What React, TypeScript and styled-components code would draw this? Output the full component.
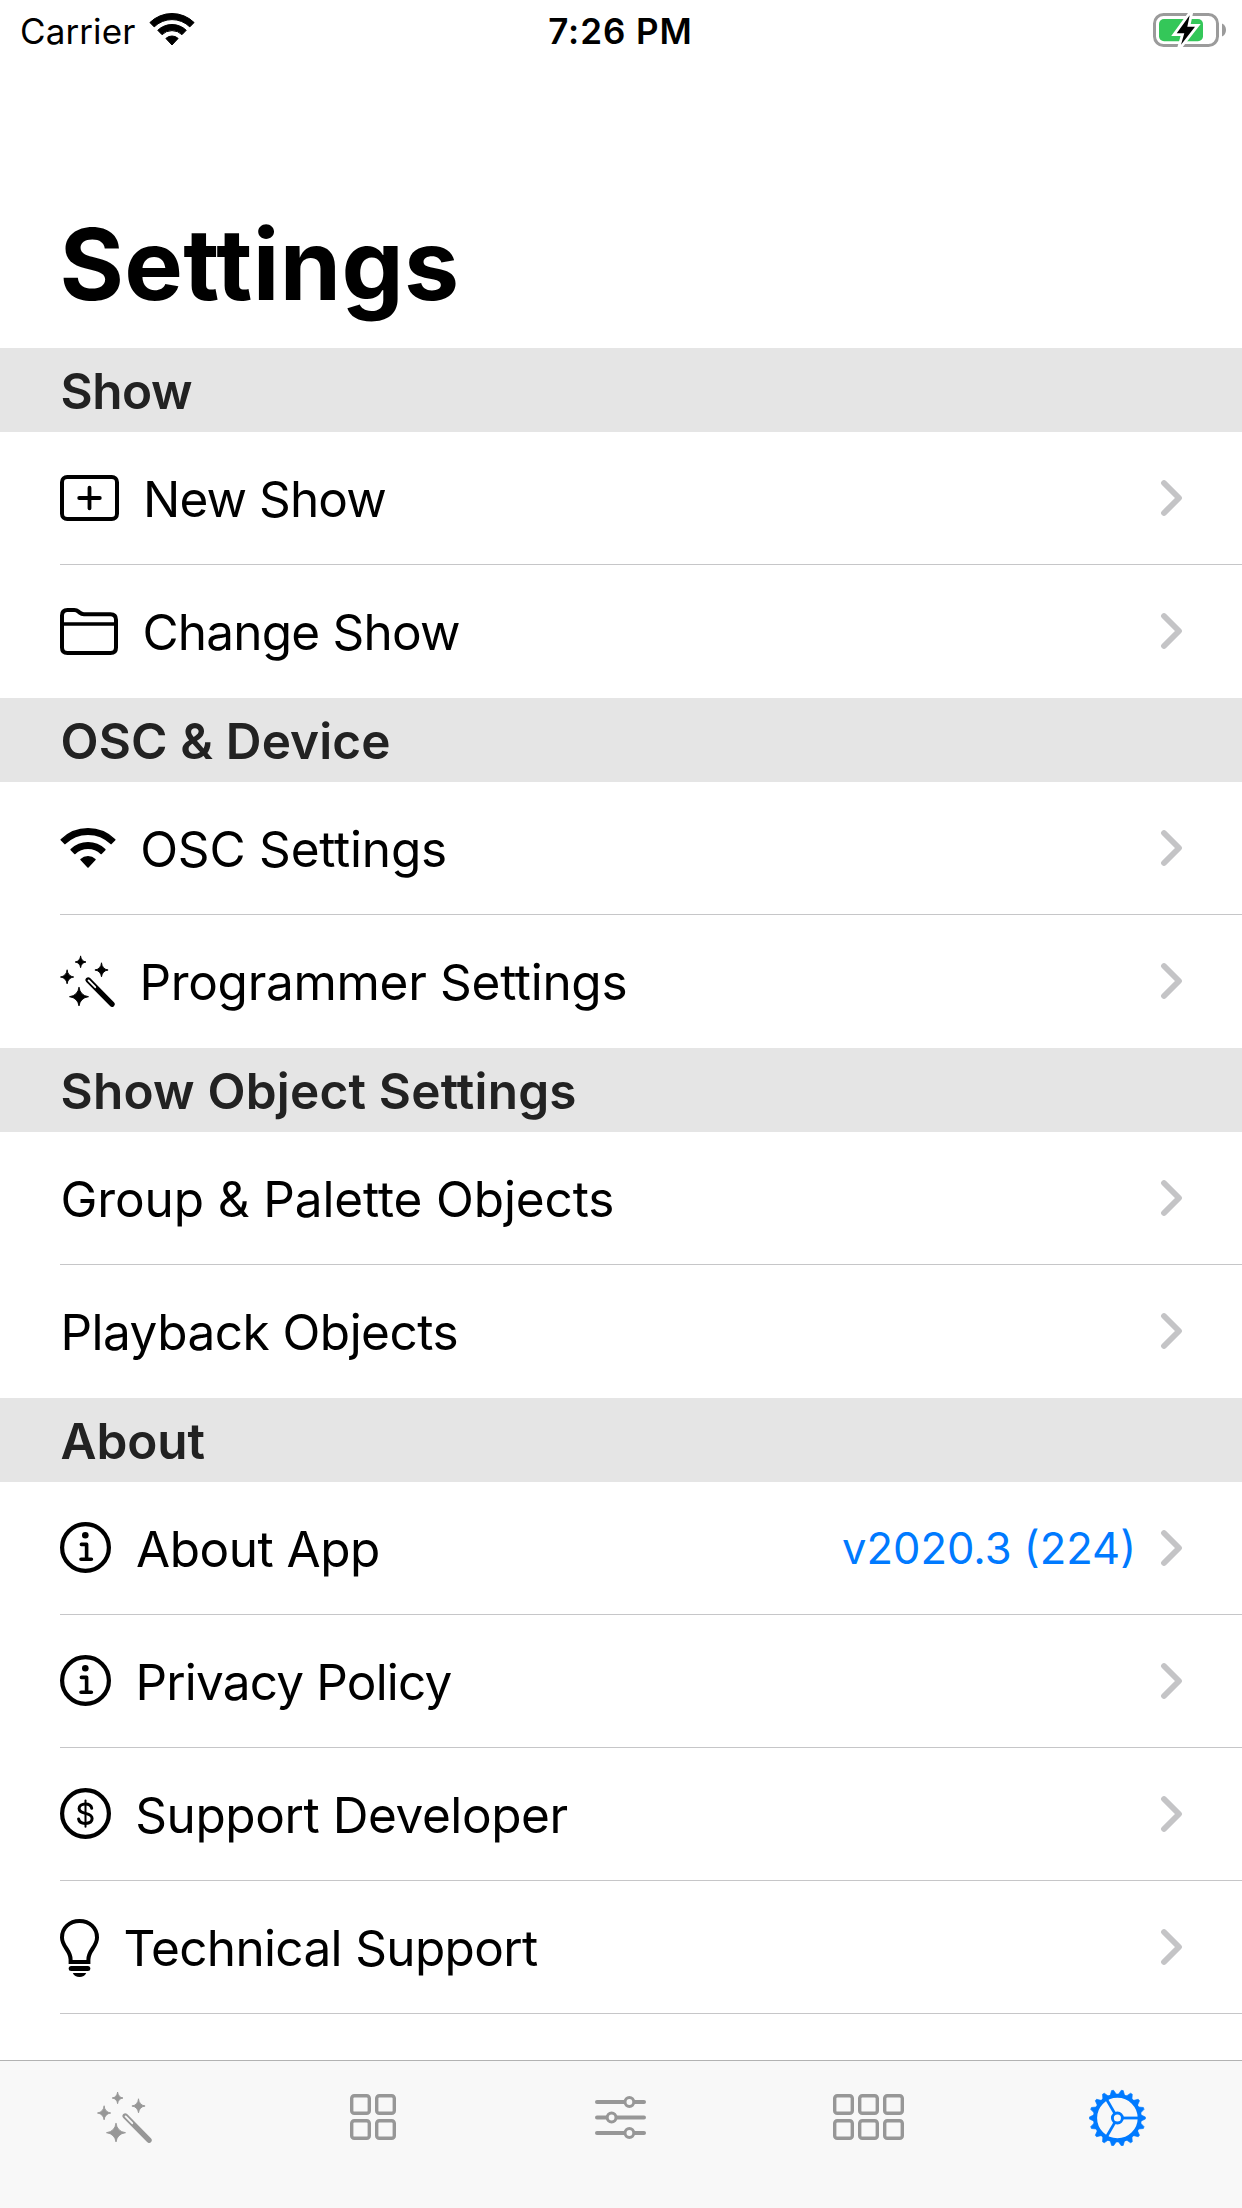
import React from "react";
import styled, { createGlobalStyle } from "styled-components";

const GlobalStyle = createGlobalStyle`
  *, *::before, *::after { box-sizing: border-box; }
  body {
    margin: 0;
    background: #fff;
    color: #000;
    font-family: Inter, "Liberation Sans", sans-serif;
  }
`;

const Screen = styled.div`
  display: flex;
  flex-direction: column;
  width: 1242px;
  height: 2208px;
  overflow: hidden;
  background: #fff;
`;

const StatusBar = styled.header`
  display: grid;
  grid-template-columns: 1fr auto 1fr;
  align-items: center;
  height: 62px;
  padding: 0 16px 0 20px;
  font-size: 35px;
  line-height: 62px;
`;

const CarrierGroup = styled.div`
  display: flex;
  align-items: center;
  gap: 14px;
  letter-spacing: 0.1px;

  svg { margin-bottom: 3px; }
`;

const Clock = styled.div`
  font-weight: 600;
  letter-spacing: 0.95px;
  padding-right: 5px;
`;

const BatteryGroup = styled.div`
  display: flex;
  justify-content: flex-end;
  margin-bottom: 2px;
`;

const Title = styled.h1`
  margin: 0;
  padding: 143px 0 23px 59.5px;
  font-size: 98.5px;
  line-height: 120px;
  font-weight: 700;
  letter-spacing: 0.35px;
`;

const Content = styled.main`
  display: flex;
  flex-direction: column;
  flex: 1;
  min-height: 0;
  overflow: hidden;
`;

const SectionHeader = styled.h2<{ $spacing: number }>`
  margin: 0;
  height: 84px;
  padding: 2px 0 0 60.6px;
  background: #e5e5e5;
  color: #222;
  font-size: 49.5px;
  line-height: 82px;
  font-weight: 600;
  letter-spacing: ${(p) => p.$spacing}px;
`;

const List = styled.ul`
  list-style: none;
  margin: 0;
  padding: 0 0 0 60px;
`;

const Row = styled.li<{ $line: boolean }>`
  display: flex;
  align-items: center;
  height: 133px;
  padding-right: 60px;
  border-bottom: 1px solid ${(p) => (p.$line ? "#c6c6c8" : "transparent")};

  svg { overflow: visible; }
`;

const IconSlot = styled.span<{ $width: number }>`
  display: flex;
  flex: none;
  width: ${(p) => p.$width}px;
`;

const Label = styled.span<{ $spacing: number }>`
  flex: 1;
  padding-top: 2px;
  font-size: 49.5px;
  line-height: 60px;
  letter-spacing: ${(p) => p.$spacing}px;
  white-space: nowrap;
`;

const Detail = styled.span`
  margin-right: 25px;
  font-size: 43.5px;
  line-height: 52px;
  color: #007aff;
`;

const TabBar = styled.nav`
  display: grid;
  grid-template-columns: repeat(5, 1fr);
  flex: none;
  height: 148px;
  border-top: 1px solid #b2b2b2;
  background: #f8f8f8;
`;

const Tab = styled.a<{ $active?: boolean }>`
  display: flex;
  align-items: center;
  justify-content: center;
  height: 113px;
  color: ${(p) => (p.$active ? "#007aff" : "#979797")};
`;

/* Annular sector opening upwards around (cx, cy). */
function band(cx: number, cy: number, outer: number, inner: number, deg: number) {
  const a = (deg * Math.PI) / 180;
  const s = Math.sin(a);
  const c = Math.cos(a);
  return (
    `M${cx - outer * s} ${cy - outer * c}A${outer} ${outer} 0 0 1 ${cx + outer * s} ${cy - outer * c}` +
    `L${cx + inner * s} ${cy - inner * c}A${inner} ${inner} 0 0 0 ${cx - inner * s} ${cy - inner * c}Z`
  );
}

function WifiStatusIcon() {
  return (
    <svg width="46" height="33" viewBox="0 0 46 33" fill="#000" stroke="#000" strokeWidth="1" strokeLinejoin="round">
      <path d={band(23, 32, 31.5, 25.4, 44.5)} />
      <path d={band(23, 32, 20.5, 14.4, 44)} />
      <path d={band(23, 32, 9, 0, 43)} />
    </svg>
  );
}

function WifiIcon() {
  return (
    <svg width="56" height="40" viewBox="0 0 56 40" fill="#000" stroke="#000" strokeWidth="1.6" strokeLinejoin="round">
      <path d={band(28, 39, 38.2, 32.9, 44.5)} />
      <path d={band(28, 39, 24.2, 18.9, 44)} />
      <path d={band(28, 39, 10.2, 0, 43)} />
    </svg>
  );
}

function BatteryIcon() {
  const bolt = "M36.7 5.3L23.7 23.3H31.3L28 34.7L42 16.7H34.3Z";
  return (
    <svg width="73" height="40" viewBox="0 0 73 40">
      <rect x="1.5" y="4.5" width="63" height="31" rx="9" fill="none" stroke="#9b9b9b" strokeWidth="3" />
      <rect x="6" y="9" width="44" height="22.3" rx="5" fill="#34c759" />
      <path d="M69 13.6C71.5 14.6 73 17 73 20S71.5 25.4 69 26.4Z" fill="#9b9b9b" />
      <path d={bolt} fill="#fff" stroke="#fff" strokeWidth="5.6" strokeMiterlimit="10" />
      <path d={bolt} fill="#000" />
    </svg>
  );
}

function PlusRectIcon() {
  return (
    <svg width="59" height="46" viewBox="0 0 59 46" fill="none" stroke="#000" strokeWidth="4" strokeLinecap="round">
      <rect x="2" y="2" width="55" height="42" rx="5.2" />
      <path d="M19.2 23H39.8M29.5 12.7V33.3" strokeWidth="3.8" />
    </svg>
  );
}

function FolderIcon() {
  return (
    <svg width="58" height="46" viewBox="0 0 58 46" fill="none" stroke="#000" strokeWidth="4">
      <path d="M2 7.5Q2 2 7.5 2H14.3C16.3 2 17.2 2.5 18.5 3.6L19.7 4.6C21.1 5.8 21.9 6.2 23.9 6.2H50.5Q56 6.2 56 11.7V39.5Q56 45 50.5 45H7.5Q2 45 2 39.5Z" />
      <path d="M2 16H56" strokeWidth="3.6" />
    </svg>
  );
}

function star(cx: number, cy: number, rx: number, ry: number) {
  const k = 0.13;
  return (
    `M${cx} ${cy - ry}Q${cx + rx * k} ${cy - ry * k} ${cx + rx} ${cy}` +
    `Q${cx + rx * k} ${cy + ry * k} ${cx} ${cy + ry}` +
    `Q${cx - rx * k} ${cy + ry * k} ${cx - rx} ${cy}` +
    `Q${cx - rx * k} ${cy - ry * k} ${cx} ${cy - ry}Z`
  );
}

function WandIcon({ back }: { back: string }) {
  return (
    <svg width="55" height="51" viewBox="0 0 55 51" fill="currentColor" stroke="currentColor" strokeLinecap="round" strokeLinejoin="round">
      <g strokeWidth="0.9">
        <path d={star(20.6, 6, 5.4, 5.7)} />
        <path d={star(41.5, 14, 6.6, 6.8)} />
        <path d={star(7.1, 21, 6.6, 6.8)} />
        <path d={star(19, 40.7, 9.5, 9.2)} />
      </g>
      <path d="M28.2 24L52 48.2" strokeWidth="5.4" />
      <path d="M28.6 24.4L35.2 31.2" stroke={back} strokeWidth="1.9" />
    </svg>
  );
}

function InfoIcon() {
  return (
    <svg width="51" height="52" viewBox="0 0 51 52" fill="none" stroke="#000" strokeLinecap="round" strokeLinejoin="round">
      <circle cx="25.5" cy="25.5" r="23.4" strokeWidth="4.2" />
      <circle cx="25.3" cy="13.2" r="3.3" fill="#000" stroke="none" />
      <path d="M21.4 22.4H26.6V37.3M21 37.3H31.4" strokeWidth="3.6" />
    </svg>
  );
}

function DollarIcon() {
  return (
    <svg width="51" height="52" viewBox="0 0 51 52" fill="none" stroke="#000" strokeLinecap="round">
      <circle cx="25.5" cy="25.5" r="23.4" strokeWidth="4.2" />
      <path
        d="M31.7 20.2C31.2 17.4 28.9 15.9 25.4 15.9C21.7 15.9 19.1 17.8 19.1 20.5C19.1 23.1 21 24.4 25.5 25.4C30.1 26.4 32.1 27.9 32.1 30.6C32.1 33.7 29.5 35.4 25.4 35.4C21.5 35.4 19 33.8 18.6 31"
        strokeWidth="3"
      />
      <path d="M25.5 12.6V38.8" strokeWidth="2" />
    </svg>
  );
}

function BulbIcon() {
  return (
    <svg width="39" height="56" viewBox="0 0 39 56" fill="none" stroke="#000" strokeWidth="4">
      <path d="M10.6 43V40.5C10.6 31 2 28 2 18.5C2 8.8 9.5 2 19.5 2C29.5 2 37 8.8 37 18.5C37 28 28.4 31 28.4 40.5V43Z" />
      <rect x="8.7" y="47" width="21.6" height="5" rx="2.5" fill="#000" stroke="none" />
      <path d="M12.8 54H26.2C25.2 56.6 22.6 58 19.5 58S13.8 56.6 12.8 54Z" fill="#000" stroke="none" />
    </svg>
  );
}

function Chevron() {
  return (
    <svg width="21" height="36" viewBox="0 0 21 36" fill="none" stroke="#c4c4c6" strokeWidth="5.8" strokeLinecap="round" strokeLinejoin="round">
      <path d="M3 3L18 18L3 33" />
    </svg>
  );
}

function SquaresIcon({ columns }: { columns: number }) {
  const width = Math.ceil((columns * 25 - 4) / 2) * 2;
  const cells: React.ReactNode[] = [];
  for (let row = 0; row < 2; row++) {
    for (let col = 0; col < columns; col++) {
      cells.push(<rect key={`${row}-${col}`} x={col * 25 + 1.7} y={row * 25 + 1.7} width="17.6" height="17.6" rx="2.6" />);
    }
  }
  return (
    <svg width={width} height="47" viewBox={`0 0 ${width} 47`} fill="none" stroke="currentColor" strokeWidth="3.4">
      {cells}
    </svg>
  );
}

function SlidersIcon() {
  const tracks = [
    { y: 6, knob: 34.4 },
    { y: 21.5, knob: 16.6 },
    { y: 37, knob: 34.4 },
  ];
  return (
    <svg width="51" height="43" viewBox="0 0 51 43" stroke="currentColor" strokeLinecap="round">
      {tracks.map((t) => (
        <g key={t.y}>
          <path d={`M2 ${t.y}H49`} strokeWidth="4" />
          <circle cx={t.knob} cy={t.y} r="4.4" fill="#f8f8f8" strokeWidth="3" />
        </g>
      ))}
    </svg>
  );
}

function GearIcon() {
  const teeth = Array.from({ length: 18 }, (_, i) => i * 20);
  return (
    <svg width="57" height="57" viewBox="0 0 57 57" fill="none" stroke="currentColor">
      <g transform="translate(28.4 29)">
        <circle r="22.3" strokeWidth="4" />
        {teeth.map((a) => (
          <path key={a} d="M23.4 -3.2L28 -1V1L23.4 3.2Z" fill="currentColor" strokeWidth="0.6" strokeLinejoin="round" transform={`rotate(${a})`} />
        ))}
        {[0, 120, 240].map((a) => (
          <path key={a} d="M5 0H22" strokeWidth="2.8" transform={`rotate(${a})`} />
        ))}
        <circle r="5" strokeWidth="2.9" />
      </g>
    </svg>
  );
}

type Item = {
  label: string;
  spacing: number;
  icon?: React.ReactNode;
  slot?: number;
  detail?: string;
};

type Section = { title: string; spacing: number; open?: boolean; items: Item[] };

const sections: Section[] = [
  {
    title: "Show",
    spacing: -0.5,
    items: [
      { label: "New Show", spacing: -0.9, icon: <PlusRectIcon />, slot: 83 },
      { label: "Change Show", spacing: -0.8, icon: <FolderIcon />, slot: 82.5 },
    ],
  },
  {
    title: "OSC & Device",
    spacing: 0.12,
    items: [
      { label: "OSC Settings", spacing: -0.2, icon: <WifiIcon />, slot: 80.2 },
      { label: "Programmer Settings", spacing: -0.3, icon: <WandIcon back="#fff" />, slot: 79.4 },
    ],
  },
  {
    title: "Show Object Settings",
    spacing: 0.2,
    items: [
      { label: "Group & Palette Objects", spacing: -0.12, slot: 0.5 },
      { label: "Playback Objects", spacing: -0.52, slot: 0.5 },
    ],
  },
  {
    title: "About",
    spacing: -0.1,
    open: true,
    items: [
      { label: "About App", spacing: -0.5, icon: <InfoIcon />, slot: 76, detail: "v2020.3 (224)" },
      { label: "Privacy Policy", spacing: -0.83, icon: <InfoIcon />, slot: 75.5 },
      { label: "Support Developer", spacing: -0.42, icon: <DollarIcon />, slot: 75.2 },
      { label: "Technical Support", spacing: -0.65, icon: <BulbIcon />, slot: 63.5 },
    ],
  },
];

export default function App() {
  return (
    <>
      <GlobalStyle />
      <Screen>
        <StatusBar>
          <CarrierGroup>
            Carrier
            <WifiStatusIcon />
          </CarrierGroup>
          <Clock>7:26 PM</Clock>
          <BatteryGroup>
            <BatteryIcon />
          </BatteryGroup>
        </StatusBar>
        <Content>
          <Title>Settings</Title>
          {sections.map((section) => (
            <section key={section.title}>
              <SectionHeader $spacing={section.spacing}>{section.title}</SectionHeader>
              <List>
                {section.items.map((item, i) => (
                  <Row key={item.label} $line={section.open || i < section.items.length - 1}>
                    <IconSlot $width={item.slot ?? 0}>{item.icon}</IconSlot>
                    <Label $spacing={item.spacing}>{item.label}</Label>
                    {item.detail && <Detail>{item.detail}</Detail>}
                    <Chevron />
                  </Row>
                ))}
              </List>
            </section>
          ))}
        </Content>
        <TabBar>
          <Tab><WandIcon back="#f8f8f8" /></Tab>
          <Tab><SquaresIcon columns={2} /></Tab>
          <Tab><SlidersIcon /></Tab>
          <Tab><SquaresIcon columns={3} /></Tab>
          <Tab $active><GearIcon /></Tab>
        </TabBar>
      </Screen>
    </>
  );
}
